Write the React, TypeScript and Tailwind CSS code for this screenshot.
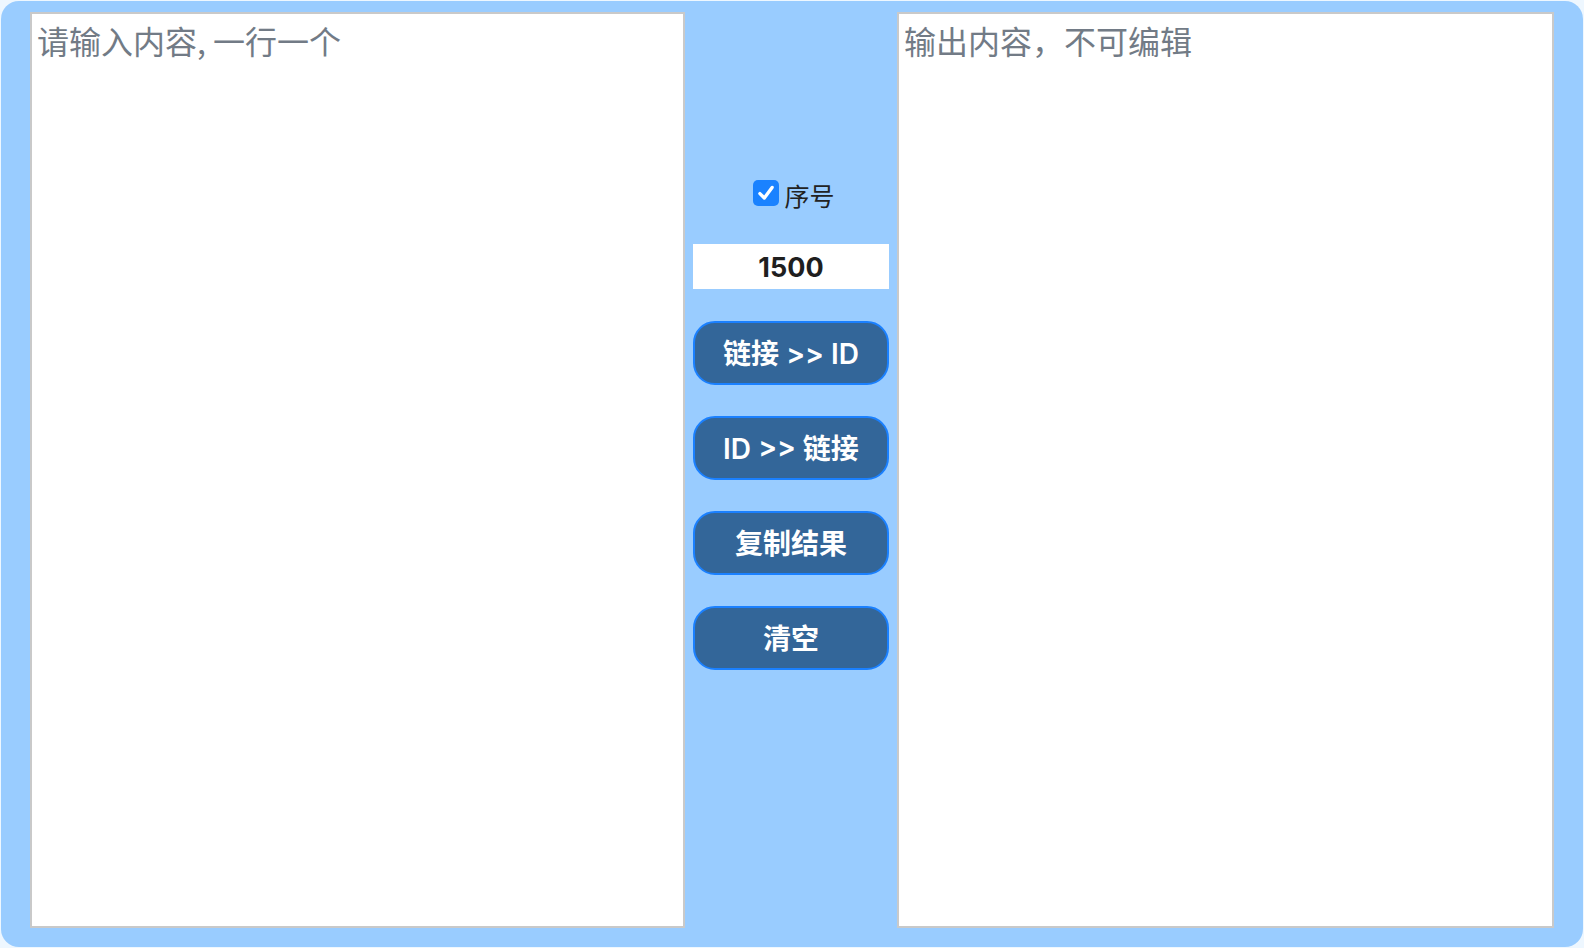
import React, { useState } from "react";

function ActionButton({ children }: { children: React.ReactNode }) {
  return (
    <button className="w-[196px] h-[64px] rounded-[22px] border-2 border-[#1a80ff] bg-[#336699] text-white text-[28px] font-semibold flex items-center justify-center leading-none pt-[2px] font-['Inter','Noto_Sans_CJK_SC',sans-serif]">
      {children}
    </button>
  );
}

export default function App() {
  const [checked, setChecked] = useState(true);
  const [input, setInput] = useState("");
  const [num, setNum] = useState("1500");
  return (
    <div className="w-full h-[948px] bg-[#eef7ff] p-px font-['Noto_Sans_CJK_SC','Noto_Sans',sans-serif]">
      <div className="h-full w-full rounded-[18px] bg-[#99ccff] flex px-[29px] pt-[11px] pb-[19px]">
        <textarea
          value={input}
          onChange={(e) => setInput(e.target.value)}
          placeholder="请输入内容, 一行一个"
          className="w-[655px] h-full shrink-0 resize-none bg-white border-2 border-[#c9c9c9] outline-none px-[5px] pt-[4px] pb-[3px] text-[32px] leading-[44px] text-[#333] placeholder:text-[#727b86] font-['Noto_Sans_CJK_SC','Noto_Sans',sans-serif]"
        />
        <div className="w-[212px] shrink-0 flex flex-col items-center pt-[168px] gap-[31px]">
          <label className="flex items-center h-[26px] cursor-pointer ml-[6px]" onClick={() => setChecked(!checked)}>
            <span className={checked ? "w-[26px] h-[26px] rounded-[5px] flex items-center justify-center bg-[#1a82ff]" : "w-[26px] h-[26px] rounded-[5px] flex items-center justify-center bg-white border border-gray-400"}>
              {checked && (
                <svg width="20" height="20" viewBox="0 0 18 18">
                  <path d="M3.5 9.5 L7.5 13.5 L14.5 4" stroke="white" strokeWidth="3" fill="none" strokeLinecap="round" strokeLinejoin="round" />
                </svg>
              )}
            </span>
            <span className="text-[25px] text-[#222] ml-[5px] leading-none mt-[4px]">序号</span>
          </label>
          <input
            value={num}
            onChange={(e) => setNum(e.target.value)}
            className="mt-[7px] mb-[1px] w-[196px] h-[45px] pt-[2px] bg-white text-center text-[27px] font-bold text-[#1f1f1f] outline-none border-0 font-['Inter','Noto_Sans',sans-serif]"
          />
          <ActionButton>链接 &gt;&gt; ID</ActionButton>
          <ActionButton>ID &gt;&gt; 链接</ActionButton>
          <ActionButton>复制结果</ActionButton>
          <ActionButton>清空</ActionButton>
        </div>
        <textarea
          readOnly
          placeholder="输出内容，不可编辑"
          className="flex-1 h-full resize-none bg-white border-2 border-[#c9c9c9] outline-none px-[5px] pt-[4px] pb-[3px] text-[32px] leading-[44px] text-[#333] placeholder:text-[#727b86] font-['Noto_Sans_CJK_SC','Noto_Sans',sans-serif]"
        />
      </div>
    </div>
  );
}
